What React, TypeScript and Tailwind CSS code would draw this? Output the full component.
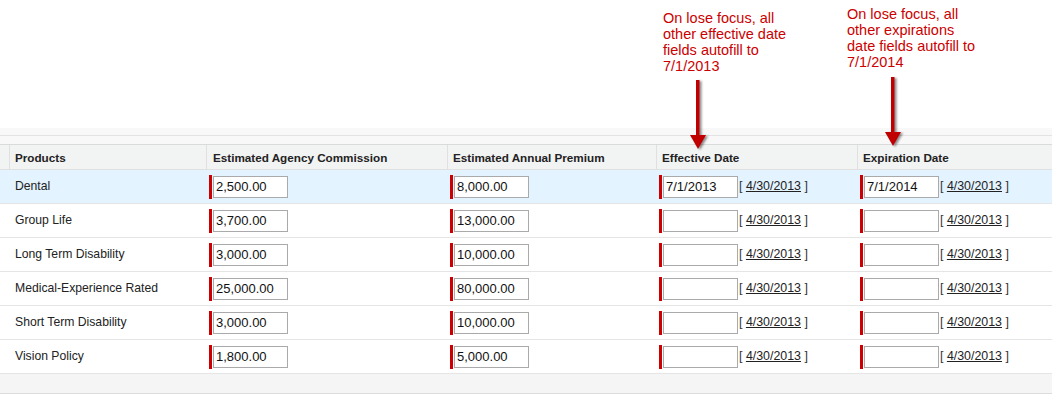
import React from 'react';

const rows = [
  { name: 'Dental', commission: '2,500.00', premium: '8,000.00', effective: '7/1/2013', expiration: '7/1/2014', active: true },
  { name: 'Group Life', commission: '3,700.00', premium: '13,000.00', effective: '', expiration: '' },
  { name: 'Long Term Disability', commission: '3,000.00', premium: '10,000.00', effective: '', expiration: '' },
  { name: 'Medical-Experience Rated', commission: '25,000.00', premium: '80,000.00', effective: '', expiration: '' },
  { name: 'Short Term Disability', commission: '3,000.00', premium: '10,000.00', effective: '', expiration: '' },
  { name: 'Vision Policy', commission: '1,800.00', premium: '5,000.00', effective: '', expiration: '' },
];

const cols = 'grid grid-cols-[10px_197px_241px_209px_201px_1fr]';

const RequiredInput = ({ value }: { value: string }) => (
  <div className="flex items-center">
    <div className="ml-[2px] w-[3px] h-[24px] bg-[#c00]" />
    <input
      readOnly
      value={value}
      className="ml-[1px] w-[75px] h-[22px] border border-[#aaa] bg-white px-[2px] text-[13px] text-[#111] outline-none"
    />
  </div>
);

const DateField = ({ value }: { value: string }) => (
  <div className="flex items-center">
    <RequiredInput value={value} />
    <span className="ml-[1px] text-[12.4px] text-[#333]">
      [ <span className="underline text-[#222]">4/30/2013</span> ]
    </span>
  </div>
);

const Arrow = ({ left, top, height }: { left: number; top: number; height: number }) => (
  <svg
    className="absolute drop-shadow-[2px_1px_1px_rgba(0,0,0,0.45)]"
    style={{ left, top }}
    width="18"
    height={height}
    viewBox={`0 0 18 ${height}`}
  >
    <rect x="7" y="0" width="3.5" height={height - 12} fill="#c00000" />
    <polygon points={`1,${height - 14} 17,${height - 14} 9,${height}`} fill="#c00000" />
  </svg>
);

export default function App() {
  return (
    <div className="w-[1052px] h-[395px] overflow-hidden bg-white font-['Liberation_Sans',Arial,sans-serif]">
      <div className="relative h-[128px]">
        <p className="absolute left-[663px] top-[10px] text-[14.5px] leading-[16px] text-[#cc0000]">
          On lose focus, all<br />
          other effective date<br />
          fields autofill to<br />
          7/1/2013
        </p>
        <p className="absolute left-[847px] top-[6px] text-[14.5px] leading-[16px] text-[#cc0000]">
          On lose focus, all<br />
          other expirations<br />
          date fields autofill to<br />
          7/1/2014
        </p>
      </div>

      <div className="h-[8px] bg-[#f8f8f8] border-b border-[#e3e3e3]" />
      <div className="h-[9px] bg-[#f8f8f8] border-b border-[#dadada]" />

      <div className={`${cols} h-[25px] bg-[#f2f3f3] border-b border-[#e0e0e0] text-[11.7px] font-bold text-[#222]`}>
        <div className="border-r border-[#e0e0e0]" />
        <div className="flex items-center pl-[5px] pt-[1px] border-r border-[#e0e0e0]">Products</div>
        <div className="flex items-center pl-[6px] pt-[1px] border-r border-[#e0e0e0]">Estimated Agency Commission</div>
        <div className="flex items-center pl-[5px] pt-[1px] border-r border-[#e0e0e0]">Estimated Annual Premium</div>
        <div className="flex items-center pl-[5px] pt-[1px] border-r border-[#e0e0e0]">Effective Date</div>
        <div className="flex items-center pl-[5px] pt-[1px]">Expiration Date</div>
      </div>

      {rows.map((r) => (
        <div
          key={r.name}
          className={`${cols} h-[34px] border-b border-[#e5e5e5] text-[12.2px] text-[#222] ${r.active ? 'bg-[#e3f3ff]' : 'bg-white'}`}
        >
          <div />
          <div className="flex items-center pl-[5px]">{r.name}</div>
          <div className="flex items-center"><RequiredInput value={r.commission} /></div>
          <div className="flex items-center"><RequiredInput value={r.premium} /></div>
          <div className="flex items-center"><DateField value={r.effective} /></div>
          <div className="flex items-center"><DateField value={r.expiration} /></div>
        </div>
      ))}

      <div className="h-[20px] bg-[#f5f5f5] border-b border-[#dcdcdc]" />

      <div className="relative">
        <Arrow left={689} top={-314} height={69} />
        <Arrow left={884} top={-317} height={69} />
      </div>
    </div>
  );
}
